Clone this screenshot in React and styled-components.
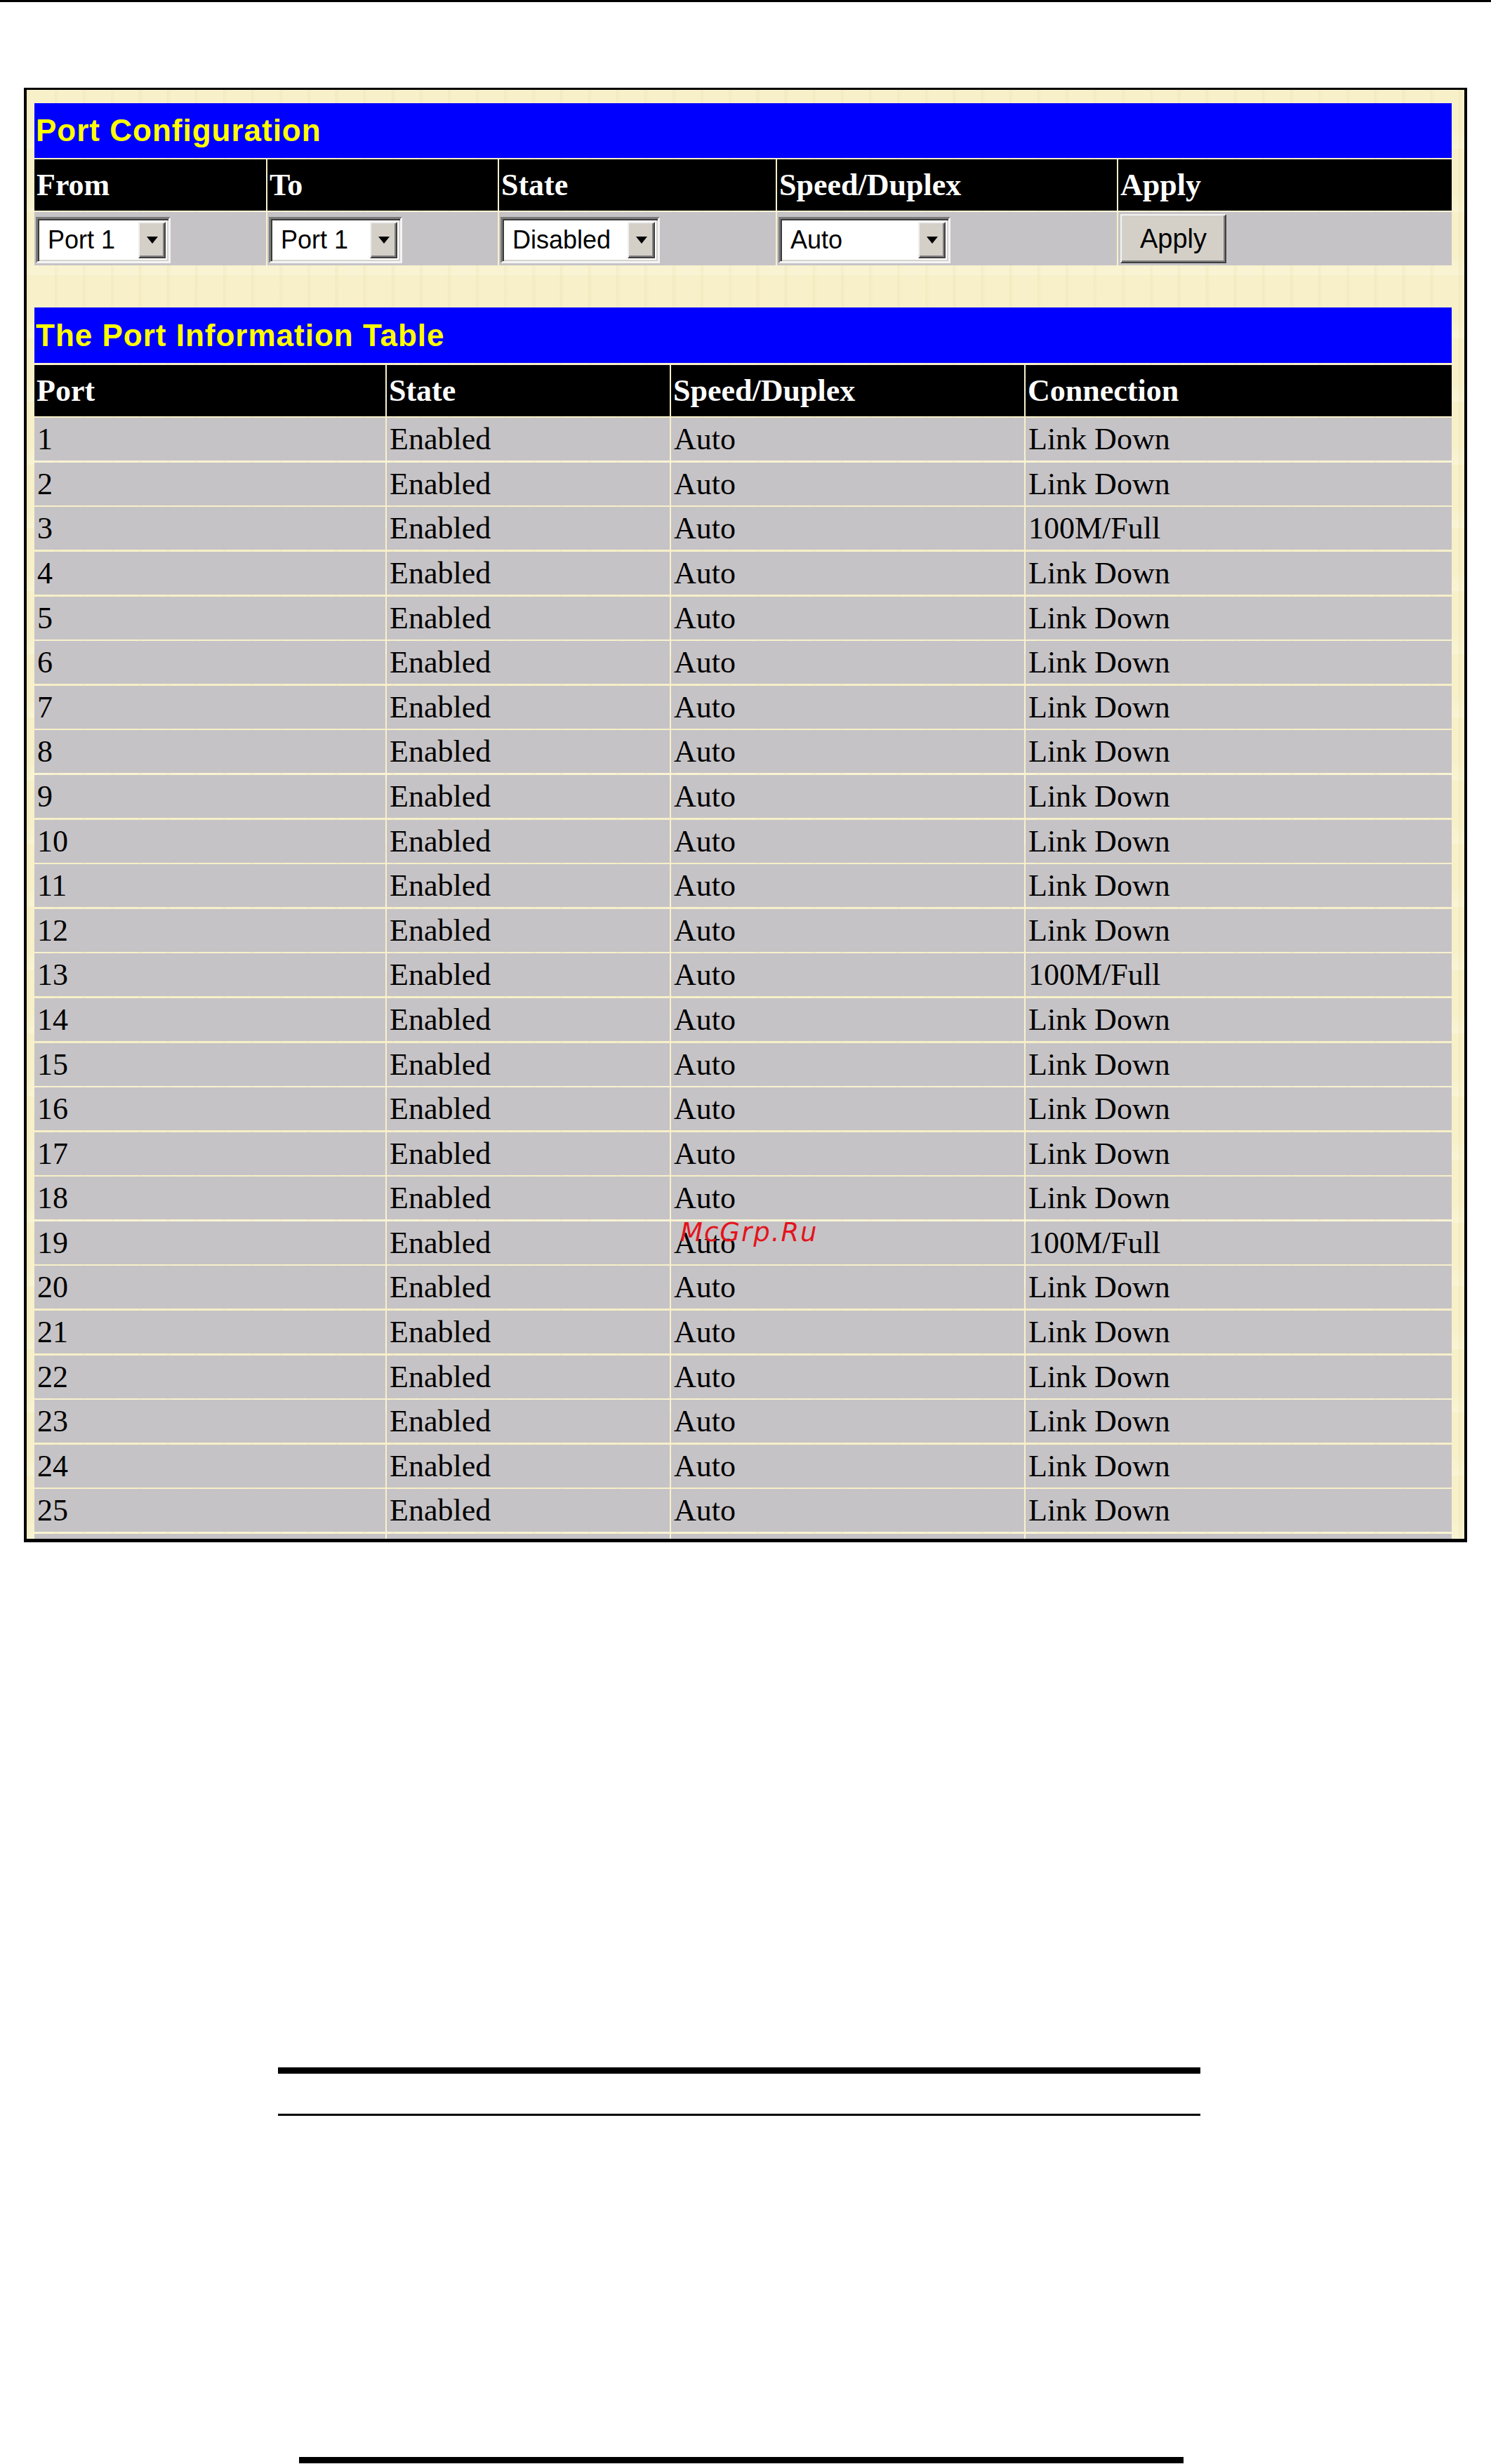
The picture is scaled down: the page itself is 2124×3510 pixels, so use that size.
import React from "react";
import styled, { createGlobalStyle } from "styled-components";

const configCols = "330px 328px 394px 484px 1fr";
const infoCols = "500px 403px 503px 1fr";

const ports = Array.from({ length: 25 }, (_, i) => ({
  port: i + 1,
  state: "Enabled",
  speed: "Auto",
  connection: [3, 13, 19].includes(i + 1) ? "100M/Full" : "Link Down",
}));

function Select({ value, width }) {
  return (
    <SelectBox $w={width}>
      <SelectText>{value}</SelectText>
      <DropButton>
        <Arrow />
      </DropButton>
    </SelectBox>
  );
}

function App() {
  return (
    <Page>
      <GlobalStyle />
      <TopRule />

      <Panel>
        <Section>
          <TitleBar>Port Configuration</TitleBar>
          <Row $cols={configCols} $h={73}>
            <HeadCell>From</HeadCell>
            <HeadCell>To</HeadCell>
            <HeadCell>State</HeadCell>
            <HeadCell>Speed/Duplex</HeadCell>
            <HeadCell>Apply</HeadCell>
          </Row>
          <Row $cols={configCols} $h={76}>
            <ControlCell>
              <Select value="Port 1" width={192} />
            </ControlCell>
            <ControlCell>
              <Select value="Port 1" width={190} />
            </ControlCell>
            <ControlCell>
              <Select value="Disabled" width={227} />
            </ControlCell>
            <ControlCell>
              <Select value="Auto" width={245} />
            </ControlCell>
            <ControlCell>
              <ApplyButton>Apply</ApplyButton>
            </ControlCell>
          </Row>
        </Section>

        <Section $info>
          <TitleBar $h={79}>The Port Information Table</TitleBar>
          <Row $cols={infoCols} $h={73}>
            <HeadCell>Port</HeadCell>
            <HeadCell>State</HeadCell>
            <HeadCell>Speed/Duplex</HeadCell>
            <HeadCell>Connection</HeadCell>
          </Row>
          {ports.map((p) => (
            <Row key={p.port} $cols={infoCols} $h={61}>
              <DataCell>{p.port}</DataCell>
              <DataCell>{p.state}</DataCell>
              <DataCell>{p.speed}</DataCell>
              <DataCell>{p.connection}</DataCell>
            </Row>
          ))}
          <Row $cols={infoCols} $h={7}>
            <DataCell />
            <DataCell />
            <DataCell />
            <DataCell />
          </Row>
        </Section>

        {/* stamp printed over row 19 in the source scan */}
        <Watermark>McGrp.Ru</Watermark>
      </Panel>

      <FooterRules>
        <ThickRule />
        <ThinRule />
      </FooterRules>
      <BottomRule />
    </Page>
  );
}

export default App;

const GlobalStyle = createGlobalStyle`
  html, body {
    margin: 0;
    padding: 0;
    background: #fff;
  }
`;

const Page = styled.div`
  width: 2124px;
  height: 3510px;
  position: relative;
  overflow: hidden;
  background: #fff;
  font-family: "Liberation Serif", serif;
`;

const TopRule = styled.div`
  height: 3px;
  background: #000;
`;

const Panel = styled.div`
  position: relative;
  box-sizing: border-box;
  width: 2056px;
  margin: 122px 0 0 34px;
  padding: 19px 18px 0 11px;
  border-style: solid;
  border-color: #000;
  border-width: 3px 4px 5px 4px;
  background-color: #f7f0c9;
  background-image: repeating-linear-gradient(
      90deg,
      rgba(230, 214, 160, 0.25) 0px,
      rgba(230, 214, 160, 0) 6px,
      rgba(230, 214, 160, 0) 40px
    ),
    repeating-linear-gradient(
      0deg,
      rgba(255, 255, 240, 0.3) 0px,
      rgba(255, 255, 240, 0) 30px,
      rgba(255, 255, 240, 0) 90px
    );
`;

const Section = styled.div`
  display: flex;
  flex-direction: column;
  gap: ${(p) => (p.$info ? "2.6px" : "2px")};
  margin-top: ${(p) => (p.$info ? "60px" : "0")};
`;

const TitleBar = styled.div`
  height: ${(p) => p.$h || 78}px;
  background: #0000ff;
  color: #ffff00;
  font-family: "Liberation Sans", Arial, sans-serif;
  font-weight: bold;
  font-size: 44px;
  letter-spacing: 1px;
  display: flex;
  align-items: center;
  padding-left: 2px;
  box-sizing: border-box;
`;

const Row = styled.div`
  display: grid;
  grid-template-columns: ${(p) => p.$cols};
  column-gap: 2px;
  height: ${(p) => p.$h}px;
`;

const HeadCell = styled.div`
  background: #000;
  color: #fff;
  font-family: "Liberation Serif", "Times New Roman", serif;
  font-weight: bold;
  font-size: 44px;
  display: flex;
  align-items: center;
  padding-left: 3px;
  overflow: hidden;
  white-space: nowrap;
`;

const DataCell = styled.div`
  background: #c6c3c6;
  color: #000;
  font-family: "Liberation Serif", "Times New Roman", serif;
  font-size: 44px;
  display: flex;
  align-items: center;
  padding-left: 4px;
  overflow: hidden;
  white-space: nowrap;
`;

const ControlCell = styled.div`
  background: #c6c3c6;
  display: flex;
  align-items: center;
  padding: 4px 0 0 2px;
  box-sizing: border-box;
`;

const SelectBox = styled.div`
  box-sizing: border-box;
  width: ${(p) => p.$w}px;
  height: 66px;
  display: flex;
  align-items: center;
  justify-content: space-between;
  background: #fff;
  border: 3px solid;
  border-color: #7b7b7b #f4f4f4 #f4f4f4 #7b7b7b;
  box-shadow: inset 2px 2px 0 #3a3a3a, inset -2px -2px 0 #d6d3ce;
  padding: 0 4px 0 14px;
`;

const SelectText = styled.span`
  font-family: "Liberation Sans", Arial, sans-serif;
  font-size: 36px;
  color: #000;
  white-space: nowrap;
`;

const DropButton = styled.div`
  box-sizing: border-box;
  width: 39px;
  height: 52px;
  flex-shrink: 0;
  background: #d4d0c8;
  border: 2px solid;
  border-color: #f0f0f0 #404040 #404040 #f0f0f0;
  box-shadow: inset -2px -2px 0 #808080;
  display: flex;
  align-items: center;
  justify-content: center;
`;

const Arrow = styled.div`
  width: 0;
  height: 0;
  border-left: 8px solid transparent;
  border-right: 8px solid transparent;
  border-top: 10px solid #000;
`;

const ApplyButton = styled.button`
  box-sizing: border-box;
  width: 151px;
  height: 70px;
  margin-left: 1px;
  margin-top: -4px;
  background: #d4d0c8;
  border: 2px solid;
  border-color: #f4f4f4 #404040 #404040 #f4f4f4;
  box-shadow: inset -2px -2px 0 #808080;
  font-family: "Liberation Sans", Arial, sans-serif;
  font-size: 38px;
  color: #000;
  padding: 0;
`;

const Watermark = styled.div`
  position: absolute;
  left: 931px;
  top: 1609px;
  font-family: "DejaVu Sans", sans-serif;
  font-style: oblique;
  font-size: 37px;
  line-height: 1;
  letter-spacing: 2px;
  color: #e3141c;
  pointer-events: none;
`;

const FooterRules = styled.div`
  display: flex;
  flex-direction: column;
  gap: 57px;
  width: 1314px;
  margin: 748px 0 0 396px;
`;

const ThickRule = styled.div`
  height: 9px;
  background: #000;
`;

const ThinRule = styled.div`
  height: 3px;
  background: #000;
`;

const BottomRule = styled.div`
  width: 1260px;
  height: 9px;
  margin: 486px 0 0 426px;
  background: #000;
`;
